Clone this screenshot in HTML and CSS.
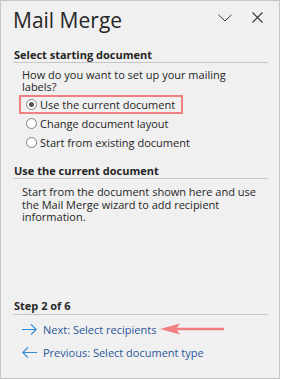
FILE: index.html
```html
<!DOCTYPE html>
<html>
<head>
<meta charset="utf-8">
<link rel="stylesheet" href="styles.css">
</head>
<body>
<div class="panel">
  <header class="head">
    <h1 class="title">Mail Merge</h1>
    <div class="ctrls">
      <svg class="ic" width="14" height="8" viewBox="0 0 14 8"><path d="M0.5 0.8 L7 7 L13.5 0.8" fill="none" stroke="#3a3a3a" stroke-width="1"/></svg>
      <svg class="ic" width="11" height="11" viewBox="0 0 11 11"><path d="M0.5 0.5 L10.5 10.5 M10.5 0.5 L0.5 10.5" fill="none" stroke="#3a3a3a" stroke-width="1.1"/></svg>
    </div>
  </header>

  <section class="sec">
    <h2 class="sec-h">Select starting document</h2>
    <p class="txt q">How do you want to set up your mailing labels?</p>
    <div class="radios">
      <div class="radio sel"><span class="dot"></span><span>Use the current document</span></div>
      <div class="radio"><span class="dot"></span><span>Change document layout</span></div>
      <div class="radio"><span class="dot"></span><span>Start from existing document</span></div>
    </div>
  </section>

  <section class="sec sec2">
    <h2 class="sec-h">Use the current document</h2>
    <p class="txt desc">Start from the document shown here and use the Mail Merge wizard to add recipient information.</p>
  </section>

  <footer class="step">
    <h2 class="sec-h">Step 2 of 6</h2>
    <div class="nav">
      <a class="link"><svg class="arr" width="15" height="11" viewBox="0 0 15 11"><path d="M0 5.5 H14.2 M9 0.3 L14.2 5.5 L9 10.7" fill="none" stroke="#2d8ad6" stroke-width="1.1"/></svg><span>Next: Select recipients</span>
        <svg class="callout" width="64" height="14" viewBox="0 0 64 14"><path d="M14 7 H64" stroke="#f27f7f" stroke-width="2.4"/><path d="M0 7 L20 1.5 L16 7 L20 12.5 Z" fill="#f27f7f"/></svg>
      </a>
      <a class="link"><svg class="arr" width="15" height="11" viewBox="0 0 15 11"><path d="M15 5.5 H0.8 M6 0.3 L0.8 5.5 L6 10.7" fill="none" stroke="#2d8ad6" stroke-width="1.1"/></svg><span>Previous: Select document type</span></a>
    </div>
  </footer>
</div>
</body>
</html>
```
FILE: styles.css
```css
html, body { margin: 0; padding: 0; background: #fff; }
body { font-family: "Open Sans", "Noto Sans", sans-serif; color: #262626; }
.panel {
  width: 280px; height: 379px; box-sizing: border-box;
  border: 1px solid #c6c6c6; background: #f0f0f0;
  display: flex; flex-direction: column;
  padding: 0 11px 0 12px;
}
.head { display: flex; align-items: center; justify-content: space-between; height: 42px; box-sizing: border-box; padding-top: 5px; padding-bottom: 9px; }
.title { margin: 0; font-weight: 400; font-size: 21px; line-height: 28px; color: #262626; }
.ctrls { display: flex; align-items: center; gap: 20px; padding-right: 5px; padding-bottom: 5px; }
.ic { display: block; }
.sec-h {
  margin: 0; font-size: 11px; font-weight: 700; line-height: 12px;
  padding: 0 0 1px 1px; border-bottom: 1px solid #c6c6c6; color: #262626;
}
.sec { margin-top: 6px; }
.sec2 { margin-top: 13px; }
.txt { margin: 6px 0 0 9px; font-size: 11px; line-height: 11.5px; padding-right: 4px; }
.txt.q { padding-right: 30px; }
.txt.desc { margin-top: 7px; line-height: 12.5px; }
.radios { display: flex; flex-direction: column; align-items: flex-start; margin-top: 3px; }
.radio { display: flex; align-items: center; gap: 3px; font-size: 11px; height: 19px; box-sizing: border-box; padding-left: 13px; }
.radio.sel { border: 2px solid #f07f7f; margin-left: 6px; padding-left: 5px; padding-right: 6px; }
.dot { width: 11px; height: 11px; border-radius: 50%; border: 1px solid #808080; background: #fff; box-sizing: border-box; position: relative; }
.sel .dot::after { content: ""; position: absolute; left: 2px; top: 2px; width: 5px; height: 5px; border-radius: 50%; background: #555; }
.step { margin-top: auto; padding-bottom: 14.5px; }
.step .sec-h { padding-bottom: 2px; }
.nav { display: flex; flex-direction: column; margin-top: 2.5px; padding-left: 9px; }
.link { display: flex; align-items: center; gap: 6px; color: #2b579a; font-size: 11px; line-height: 11px; height: 23px; position: relative; }
.arr { display: block; flex: none; }
.callout { position: absolute; left: 138px; top: 4.5px; }
```
